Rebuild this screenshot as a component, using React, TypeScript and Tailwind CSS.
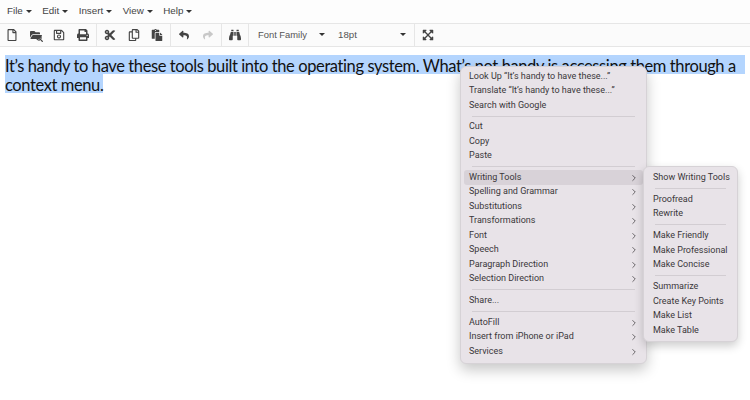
import { ChevronRight } from "lucide-react";
import {
  FaBinoculars,
  FaCut,
  FaExpandArrowsAlt,
  FaFolderOpen,
  FaPaste,
  FaPrint,
  FaRegCopy,
  FaRegFile,
  FaRegSave,
  FaReply,
  FaSearch,
  FaShare,
} from "react-icons/fa";

const menus = ["File", "Edit", "Insert", "View", "Help"];

type Row = { label: string; sub?: boolean; active?: boolean };

const mainMenu: Row[][] = [
  [
    { label: "Look Up “It’s handy to have these...”" },
    { label: "Translate “It’s handy to have these...”" },
    { label: "Search with Google" },
  ],
  [{ label: "Cut" }, { label: "Copy" }, { label: "Paste" }],
  [
    { label: "Writing Tools", sub: true, active: true },
    { label: "Spelling and Grammar", sub: true },
    { label: "Substitutions", sub: true },
    { label: "Transformations", sub: true },
    { label: "Font", sub: true },
    { label: "Speech", sub: true },
    { label: "Paragraph Direction", sub: true },
    { label: "Selection Direction", sub: true },
  ],
  [{ label: "Share..." }],
  [
    { label: "AutoFill", sub: true },
    { label: "Insert from iPhone or iPad", sub: true },
    { label: "Services", sub: true },
  ],
];

const subMenu: string[][] = [
  ["Show Writing Tools"],
  ["Proofread", "Rewrite"],
  ["Make Friendly", "Make Professional", "Make Concise"],
  ["Summarize", "Create Key Points", "Make List", "Make Table"],
];

function Caret() {
  return <span className="ml-[3px] h-0 w-0 border-x-[3px] border-t-[3px] border-x-transparent border-t-[#333]" />;
}

function ToolButton({ children, muted }: { children: React.ReactNode; muted?: boolean }) {
  return (
    <span className={`flex h-full w-[23.7px] items-center justify-center text-[12px] ${muted ? "text-[#c8c8c8]" : "text-[#444]"}`}>
      {children}
    </span>
  );
}

function Sep() {
  return <span className="mx-[1.15px] h-full w-px bg-[#e6e6e6]" />;
}

export default function App() {
  return (
    <div className="relative h-[400px] w-[750px] overflow-hidden bg-white font-['Liberation_Sans',sans-serif]">
      <div className="flex h-[23px] items-center gap-[10.5px] bg-[#fdfdfd] pl-[7px] text-[9.8px] text-[#444]">
        {menus.map((m) => (
          <span key={m} className="flex items-center">
            {m}
            <Caret />
          </span>
        ))}
      </div>
      <div className="flex h-[24px] items-center border-y border-[#e6e6e6] bg-[#fbfbfb]">
        <ToolButton><FaRegFile /></ToolButton>
        <ToolButton>
          <span className="relative">
            <FaFolderOpen />
            <FaSearch className="absolute -right-px -bottom-px text-[7px]" />
          </span>
        </ToolButton>
        <ToolButton><FaRegSave /></ToolButton>
        <ToolButton><FaPrint /></ToolButton>
        <Sep />
        <ToolButton><FaCut /></ToolButton>
        <ToolButton><FaRegCopy /></ToolButton>
        <ToolButton><FaPaste /></ToolButton>
        <Sep />
        <ToolButton><FaReply className="text-[10px]" /></ToolButton>
        <ToolButton muted><FaShare className="text-[10px]" /></ToolButton>
        <Sep />
        <ToolButton><FaBinoculars /></ToolButton>
        <Sep />
        <div className="flex w-[80px] items-center justify-between pl-[8px] pr-[5px] text-[9.4px] text-[#555]">
          Font Family
          <Caret />
        </div>
        <div className="flex w-[83px] items-center justify-between pl-[8px] pr-[7px] text-[9.7px] text-[#555]">
          18pt
          <Caret />
        </div>
        <Sep />
        <ToolButton><FaExpandArrowsAlt className="-ml-px" /></ToolButton>
      </div>
      <div className="px-[5px] pt-[8px] font-['Lato',sans-serif] text-[16.5px] leading-[22px] tracking-[-0.4px] text-[#111]">
        <div className="h-[19px] bg-[#b4d5fe] whitespace-nowrap">
          It’s handy to have these tools built into the operating system. What’s not handy is accessing them through a
        </div>
        <div className="h-[19px] w-fit bg-[#b4d5fe]">context menu.</div>
      </div>

      <div className="absolute top-[66px] left-[460px] z-10 w-[187px] rounded-[6px] border border-[#d6d2d6] bg-[#e8e3e8] px-[3px] pt-[2px] pb-[4px] font-['Roboto',sans-serif] text-[9px] text-[#3a373a] shadow-[0_6px_14px_rgba(0,0,0,0.22)]">
        {mainMenu.map((group, i) => (
          <div key={i}>
            {i > 0 && <div className="mx-2 my-[3.1px] h-px bg-[#d2cdd2]" />}
            {group.map((row) => (
              <div
                key={row.label}
                className={`flex h-[14.5px] items-center justify-between rounded-[3px] pl-[5px] pr-[4px] ${row.active ? "bg-[#d8d2d8]" : ""}`}
              >
                {row.label}
                {row.sub && <ChevronRight size={10} strokeWidth={1.75} />}
              </div>
            ))}
          </div>
        ))}
      </div>

      <div className="absolute top-[166px] left-[643px] z-20 w-[95px] rounded-[6px] border border-[#d6d2d6] bg-[#e8e3e8] px-[3px] py-[3px] font-['Roboto',sans-serif] text-[9px] text-[#3a373a] shadow-[0_4px_10px_rgba(0,0,0,0.2)]">
        {subMenu.map((group, i) => (
          <div key={i}>
            {i > 0 && <div className="mx-2 my-[3.25px] h-px bg-[#d2cdd2]" />}
            {group.map((label) => (
              <div key={label} className="flex h-[14.5px] items-center pl-[6px] whitespace-nowrap">
                {label}
              </div>
            ))}
          </div>
        ))}
      </div>
    </div>
  );
}
